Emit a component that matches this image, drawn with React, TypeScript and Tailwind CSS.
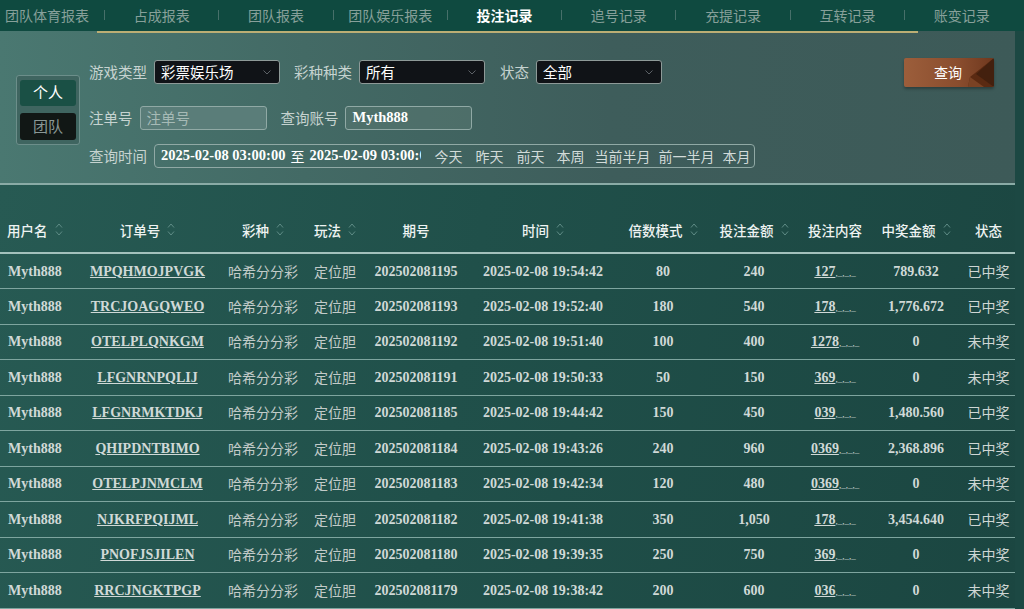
import React from 'react';

const tabs = ['团队体育报表', '占成报表', '团队报表', '团队娱乐报表', '投注记录', '追号记录', '充提记录', '互转记录', '账变记录'];

const rows = [
  ['MPQHMOJPVGK', '202502081195', '19:54:42', '80', '240', '127', '789.632', '已中奖'],
  ['TRCJOAGQWEO', '202502081193', '19:52:40', '180', '540', '178', '1,776.672', '已中奖'],
  ['OTELPLQNKGM', '202502081192', '19:51:40', '100', '400', '1278', '0', '未中奖'],
  ['LFGNRNPQLIJ', '202502081191', '19:50:33', '50', '150', '369', '0', '未中奖'],
  ['LFGNRMKTDKJ', '202502081185', '19:44:42', '150', '450', '039', '1,480.560', '已中奖'],
  ['QHIPDNTBIMO', '202502081184', '19:43:26', '240', '960', '0369', '2,368.896', '已中奖'],
  ['OTELPJNMCLM', '202502081183', '19:42:34', '120', '480', '0369', '0', '未中奖'],
  ['NJKRFPQIJML', '202502081182', '19:41:38', '350', '1,050', '178', '3,454.640', '已中奖'],
  ['PNOFJSJILEN', '202502081180', '19:39:35', '250', '750', '369', '0', '未中奖'],
  ['RRCJNGKTPGP', '202502081179', '19:38:42', '200', '600', '036', '0', '未中奖'],
];

const cols: { label: string; sort: boolean; w: string }[] = [
  { label: '用户名', sort: true, w: 'w-[75px]' },
  { label: '订单号', sort: true, w: 'w-[145px]' },
  { label: '彩种', sort: true, w: 'w-[86px]' },
  { label: '玩法', sort: true, w: 'w-[58px]' },
  { label: '期号', sort: false, w: 'w-[104px]' },
  { label: '时间', sort: true, w: 'w-[150px]' },
  { label: '倍数模式', sort: true, w: 'w-[90px]' },
  { label: '投注金额', sort: true, w: 'w-[92px]' },
  { label: '投注内容', sort: false, w: 'w-[70px]' },
  { label: '中奖金额', sort: true, w: 'w-[92px]' },
  { label: '状态', sort: false, w: 'w-[53px]' },
];

// quick range buttons inside the date box
const quick = [
  { t: '今天', c: 'ml-[13px]' },
  { t: '昨天', c: 'ml-[13px]' },
  { t: '前天', c: 'ml-[13px]' },
  { t: '本周', c: 'ml-[12px]' },
  { t: '当前半月', c: 'ml-[10px]' },
  { t: '前一半月', c: 'ml-[8px]' },
  { t: '本月', c: 'ml-[8px]' },
];

const cjk = "font-['Noto_Sans_CJK_SC',sans-serif]";
const serif = "font-['Liberation_Serif','Noto_Sans_CJK_SC',serif]";

function SortIcon() {
  return (
    <svg width="8" height="15" viewBox="0 0 8 15" className="ml-[7px] shrink-0">
      <path d="M1 5.5 L4 2 L7 5.5" fill="none" stroke="#5f8c86" strokeWidth="1" />
      <path d="M1 9.5 L4 13 L7 9.5" fill="none" stroke="#5f8c86" strokeWidth="1" />
    </svg>
  );
}

function Select({ value }: { value: string }) {
  return (
    <div className="flex h-[24px] w-[126px] items-center justify-between rounded-[3px] border border-[#8e9a98] bg-[#101317] pl-[6px] pr-[8px] text-white">
      <span>{value}</span>
      <svg width="8" height="5" viewBox="0 0 8 5">
        <path d="M0.5 0.5 L4 4 L7.5 0.5" fill="none" stroke="#5c6166" strokeWidth="1" />
      </svg>
    </div>
  );
}

export default function App() {
  return (
    <div className={`h-[609px] w-[1024px] overflow-hidden bg-[#1b4742] ${cjk}`}>
      {/* tabs */}
      <div className="flex h-[31px] items-center bg-[#0f4a40] pb-[1px] text-[14px] text-[#87a09a]">
        {tabs.map((t, i) => (
          <React.Fragment key={t}>
            {i > 0 && <span className="h-[10px] w-px bg-[#47706a]" />}
            <span
              className={`${i === 0 ? 'w-[104px] pr-[10px]' : 'w-[113.3px]'} text-center ${
                i === 4 ? 'font-bold text-white' : ''
              }`}
            >
              {t}
            </span>
          </React.Fragment>
        ))}
      </div>

      <div className="flex">
        <div className="w-[1015px]">
          {/* filter panel */}
          <div className="border-b-2 border-[#8aaba6] bg-[linear-gradient(90deg,#4a7871_0%,#436a65_30%,#3e5d5b_60%,#3d5a58_100%)]">
            <div className="flex h-[2px]">
              <div className="ml-[97px] w-[821px] bg-[#bcae74]" />
            </div>
            <div className="flex h-[150px] items-center pl-[16px]">
              <div className="mt-[3px] flex h-[70px] w-[64px] flex-col gap-[7px] rounded-[3px] border border-[#6c8e8a] bg-[#3f6560] px-[3px] py-[4px] text-[15px]">
                <div className="flex h-[26px] items-center justify-center rounded-[3px] bg-[#1a5045] text-white">个人</div>
                <div className="flex h-[27px] items-center justify-center rounded-[3px] bg-[#111715] text-[#8a9896]">团队</div>
              </div>

              <div className="ml-[9px] flex h-full flex-1 flex-col pr-[21px] pt-[27px] text-[14.5px] text-[#c6d3d0]">
                <div className="flex h-[24px] items-center">
                  <span>游戏类型</span>
                  <div className="ml-[7px]"><Select value="彩票娱乐场" /></div>
                  <span className="ml-[14px]">彩种种类</span>
                  <div className="ml-[7px]"><Select value="所有" /></div>
                  <span className="ml-[15px]">状态</span>
                  <div className="ml-[7px]"><Select value="全部" /></div>
                  <button className="relative ml-auto flex h-[29px] w-[90px] items-center justify-center overflow-hidden rounded-[2px] bg-[linear-gradient(90deg,#9c5e3b,#8a4d2e_60%,#6e381e)] text-[14px] text-white shadow-[0_2px_3px_rgba(0,0,0,0.3)]">
                    <svg width="90" height="29" viewBox="0 0 90 29" className="absolute left-0 top-0">
                      <polygon points="90,0 90,29 64,29 66,19" fill="#5a2a12" />
                      <polygon points="90,0 72,16 90,29" fill="#43200e" />
                      <polygon points="66,19 64,29 80,29" fill="#7a4224" />
                    </svg>
                    <span className="relative pr-[2px]">查询</span>
                  </button>
                </div>

                <div className="mt-[22px] flex h-[24px] items-center">
                  <span>注单号</span>
                  <div className="ml-[7px] flex h-[24px] w-[127px] items-center rounded-[3px] border border-[#90a9a5] bg-[#5a7d79] pl-[6px] text-[#a6bab6]">
                    注单号
                  </div>
                  <span className="ml-[14px]">查询账号</span>
                  <div className={`ml-[6px] flex h-[24px] w-[127px] items-center rounded-[3px] border border-[#90a9a5] bg-[#56776f]/60 pl-[7px] font-bold text-white ${serif}`}>
                    Myth888
                  </div>
                </div>

                <div className="mt-[14px] flex h-[24px] items-center">
                  <span>查询时间</span>
                  <div className="ml-[7px] flex h-[24px] w-[601px] items-center rounded-[4px] border border-[#90a9a5] pl-[6px] text-[14px] text-[#d2dbd9]">
                    <span className={`whitespace-nowrap text-[14.5px] font-bold text-white ${serif}`}>2025-02-08 03:00:00</span>
                    <span className="mx-[5px] text-white">至</span>
                    <span className={`w-[112px] overflow-hidden whitespace-nowrap text-[14.5px] font-bold text-white ${serif}`}>2025-02-09 03:00:00</span>
                    {quick.map((q) => (
                      <span key={q.t} className={q.c}>{q.t}</span>
                    ))}
                  </div>
                </div>
              </div>
            </div>
          </div>

          {/* table */}
          <div className="h-[423px] bg-[linear-gradient(100deg,#275a53_0%,#20504a_45%,#1b4641_100%)]">
            <table className="w-[1015px] table-fixed border-collapse">
              <colgroup>
                {cols.map((c) => (
                  <col key={c.label} className={c.w} />
                ))}
              </colgroup>
              <thead>
                <tr className="h-[68px] border-b-2 border-[#a3c1bc]">
                  {cols.map((c, i) => (
                    <th key={c.label} className="p-0 pb-[12px] align-bottom text-[13.5px] font-medium text-[#eef3f2]">
                      <div className={`flex items-center ${i === 0 ? 'justify-start pl-[7px]' : 'justify-center'}`}>
                        <span>{c.label}</span>
                        {c.sort && <SortIcon />}
                      </div>
                    </th>
                  ))}
                </tr>
              </thead>
              <tbody className="text-[14px] text-[#d0d9d7]">
                {rows.map((r) => (
                  <tr key={r[0]} className="h-[35.5px] border-b border-[#7ea59f]">
                    <td className={`p-0 pl-[8px] font-bold ${serif}`}>Myth888</td>
                    <td className={`p-0 text-center font-bold underline ${serif}`}>{r[0]}</td>
                    <td className="p-0 text-center text-[#c2cbc9]">哈希分分彩</td>
                    <td className="p-0 text-center text-[#c2cbc9]">定位胆</td>
                    <td className={`p-0 text-center font-bold ${serif}`}>{r[1]}</td>
                    <td className={`p-0 text-center font-bold ${serif}`}>2025-02-08 {r[2]}</td>
                    <td className={`p-0 text-center font-bold ${serif}`}>{r[3]}</td>
                    <td className={`p-0 text-center font-bold ${serif}`}>{r[4]}</td>
                    <td className={`p-0 text-center font-bold ${serif}`}>
                      <span className="underline">{r[5]}</span>
                      <span className="text-[9px] font-normal">,_,_,_</span>
                    </td>
                    <td className={`p-0 text-center font-bold ${serif}`}>{r[6]}</td>
                    <td className="p-0 text-center text-[#cfd6d4]">{r[7]}</td>
                  </tr>
                ))}
              </tbody>
            </table>
          </div>
        </div>
        <div className="w-[9px] bg-[#1c4843]" />
      </div>
    </div>
  );
}
